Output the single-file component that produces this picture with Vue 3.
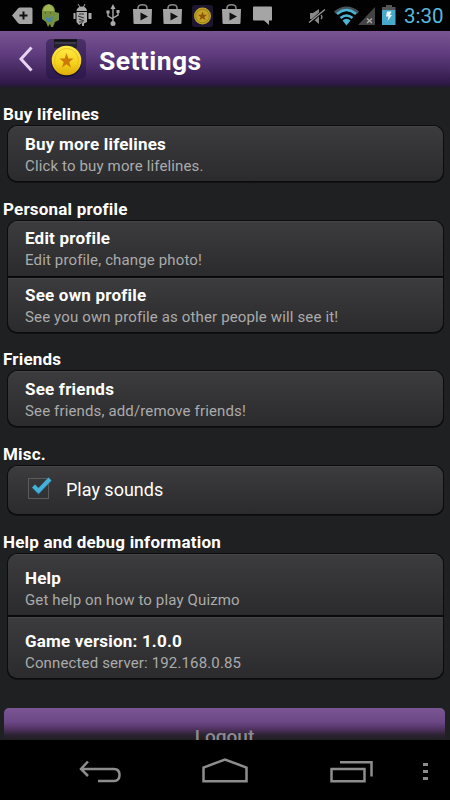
<script setup>
import { ref } from 'vue'

const soundsOn = ref(true)
const sections = [
  { title: 'Buy lifelines', rows: [{ title: 'Buy more lifelines', text: 'Click to buy more lifelines.' }] },
  {
    title: 'Personal profile',
    rows: [
      { title: 'Edit profile', text: 'Edit profile, change photo!' },
      { title: 'See own profile', text: 'See you own profile as other people will see it!' },
    ],
  },
  { title: 'Friends', rows: [{ title: 'See friends', text: 'See friends, add/remove friends!' }] },
  { title: 'Misc.', rows: [{ check: true, title: 'Play sounds' }] },
  {
    title: 'Help and debug information',
    tall: true,
    rows: [
      { title: 'Help', text: 'Get help on how to play Quizmo' },
      { title: 'Game version: 1.0.0', text: 'Connected server: 192.168.0.85' },
    ],
  },
]
</script>

<template>
  <div class="screen">
    <header class="status">
      <svg class="status-icons" width="280" height="31" viewBox="0 0 280 31">
        <path d="M12 15.500 18 8.500Q19 7.500 20 7.500H31Q32.500 7.500 32.500 9V22.500Q32.500 24 31 24H20Q19 24 18 23Z" fill="#a5a5a5" />
        <path d="M23.500 11.500v8M19.500 15.500h8" stroke="#111" stroke-width="2" />
        <path d="M42 14Q41 5 49 4Q55 5 55 12L59 13V20L55 22L53 27H51L50 24L48 27L46 22L42 19Z" fill="#77903c" />
        <path d="M43 11Q44 5 49 4.500Q54 6 54 11Z" fill="#a0b650" />
        <path d="M45 17 49 18 53 16 52 22 47 22Z" fill="#4b86a0" />
        <path d="M45 13h1M50 13h1" stroke="#334016" />
        <path d="M76.500 11Q77 6.500 82 6.500Q86.500 6.500 87 11ZM76.500 12H87V22L84 23.500V26H82V23L79 25L76.500 22ZM73.500 13h2v6h-2zM88.500 13h3v6h-3z" fill="#aaa" />
        <path d="M78 4 80 7M85 4 83.500 7" stroke="#aaa" />
        <path d="M79 14h5M78 16l6 2M79 19l5 2M79 22h4" stroke="#333" stroke-width="1.200" />
        <g fill="none" stroke="#aaa" stroke-width="1.400">
          <path d="M113 8V23M108 12V16L113 19M118 12V15L113 18" />
        </g>
        <path d="M113 4 115.500 9H110.500ZM106.500 10.500h3v3h-3zM116.500 10h3v3h-3z" fill="#aaa" />
        <circle cx="113" cy="23.500" r="2.500" fill="#aaa" />
        <g v-for="x in [133, 163, 222]" :key="x" :transform="`translate(${x} 0)`">
          <path d="M5 10V8Q5 4.800 9.500 4.800Q14 4.800 14 8V10" fill="none" stroke="#888" stroke-width="1.500" />
          <path d="M0 9H19L18.500 23Q18.500 24 17.500 24H1.500Q.5 24 .5 23Z" fill="#a5a5a5" />
          <path d="M7.500 12.500 15 16.500 7.500 20.500Z" fill="#111" />
        </g>
        <rect x="192" y="5" width="21" height="22" rx="3" fill="#1d1632" />
        <circle cx="202.500" cy="16" r="8.500" fill="#c3a323" />
        <circle cx="202.500" cy="16" r="6.800" fill="none" stroke="#8a7119" stroke-width=".7" />
        <path d="M202.500 11.500 203.700 14.700 207 14.800 204.400 17 205.400 20 202.500 18.200 199.600 20 200.600 17 198 14.800 201.300 14.700Z" fill="#8f5310" />
        <path d="M254 6.500H271Q272 6.500 272 7.500V20Q272 20.500 271 20.500H269V25L264 20.500H254Q253 20.500 253 19.500V7.500Q253 6.500 254 6.500Z" fill="#a5a5a5" />
      </svg>
      <svg class="status-icons" width="92" height="31" viewBox="305 0 92 31">
        <path d="M310 13H313L319 9V24L313 19H310Z" fill="#888" />
        <path d="M309 23.500 325 9" stroke="#000" stroke-width="3" />
        <path d="M309 22.500 325 9.500" stroke="#999" stroke-width="1.400" />
        <path d="M321 15q2 2 0 4" fill="none" stroke="#888" stroke-width="1.300" />
        <path d="M334 11.500Q346.500 1.500 359 11.500L357 14Q346.500 5 336 14Z" fill="#45545a" />
        <g fill="none" stroke="#4cb4d5">
          <path d="M337 14Q346.500 6 356 14" stroke-width="2.600" />
          <path d="M340.500 18Q346.500 13 352.500 18" stroke-width="2.600" />
        </g>
        <path d="M342.500 20.500Q346.500 17 350.500 20.500L346.500 25.500Z" fill="#4cb4d5" />
        <path d="M375 7V25H358Z" fill="#434343" />
        <path d="M367 18.500 372 23M372 18.500 367 23" stroke="#aaa" stroke-width="1.400" />
        <path d="M386 5H392V7H395.500V10H382V7H386Z" fill="#555" />
        <path d="M382 10H395.500V25H382Z" fill="#48aacb" />
        <path d="M387 11.500H391.500L390 15H392L387.500 21L388.500 16.500H386Z" fill="#f2f8fa" />
      </svg>
      <span class="clock">3:30</span>
    </header>

    <div class="appbar">
      <svg class="back" width="16" height="28" viewBox="0 0 16 28"><path d="M13.500 2.500 3 14 13.500 25.500" fill="none" stroke="#e6d5f2" stroke-width="3" /></svg>
      <svg class="logo" width="40" height="42" viewBox="0 0 40 42">
        <defs>
          <linearGradient id="gold" x2="0" y2="1"><stop stop-color="#ffed4a" /><stop offset=".6" stop-color="#f5d21c" /><stop offset="1" stop-color="#dca80c" /></linearGradient>
          <linearGradient id="tile" x2="0" y2="1"><stop stop-color="#4a3069" /><stop offset="1" stop-color="#2c184c" /></linearGradient>
        </defs>
        <rect width="40" height="40" rx="5" fill="url(#tile)" />
        <path d="M8 0H31V9H8Z" fill="#242130" />
        <path d="M8 1.500H31" stroke="#111016" stroke-width="1.800" />
        <path d="M9 4H30" stroke="#55505f" />
        <circle cx="20.500" cy="23" r="15" fill="#160e25" />
        <circle cx="20.500" cy="21.500" r="14.800" fill="url(#gold)" />
        <circle cx="20.500" cy="21.500" r="12" fill="none" stroke="#e6b91b" stroke-width=".8" />
        <path d="M20.500 14 22.300 19.500 27.500 19.600 23.300 22.900 24.900 28.500 20.500 25.200 16.100 28.500 17.700 22.900 13.500 19.600 18.700 19.500Z" fill="#ce780b" />
      </svg>
      <h1>Settings</h1>
    </div>

    <main>
      <section v-for="s in sections" :key="s.title">
        <h2>{{ s.title }}</h2>
        <div class="card" :class="{ tall: s.tall }">
          <div v-for="r in s.rows" :key="r.title" class="row" :class="{ check: r.check }">
            <template v-if="r.check">
              <svg width="28" height="26" viewBox="0 0 28 26" @click="soundsOn = !soundsOn">
                <rect x="3.500" y="4.500" width="20" height="20" fill="none" stroke="#5b5b5d" />
                <path v-if="soundsOn" d="M8.500 12 13.500 17.500 25 5" fill="none" stroke="#266078" stroke-width="5.500" opacity=".5" />
                <path v-if="soundsOn" d="M8.500 12 13.500 17 25 5" fill="none" stroke="#43b1d8" stroke-width="4" />
              </svg>
              <span>{{ r.title }}</span>
            </template>
            <template v-else>
              <h3>{{ r.title }}</h3>
              <p>{{ r.text }}</p>
            </template>
          </div>
        </div>
      </section>
      <button class="logout">Logout</button>
    </main>

    <nav>
      <svg width="450" height="60" viewBox="0 740 450 60">
        <g fill="none" stroke="#8d8d8d" stroke-width="2.500">
          <path d="M88 761.500 81 769 88 776M81 769H114Q119.500 769 119.500 775Q119.500 781 114 781H98" />
          <path d="M203.500 781.300V767.500L225 759.500 246.500 767.500V781.300Z" />
          <path d="M331.500 769H364.500V781.300H331.500ZM340 762.300H371.500V776.500" />
        </g>
        <path d="M423 763h5v3h-5zM423 770h5v3h-5zM423 777h5v3h-5z" fill="#8d8d8d" />
      </svg>
    </nav>
  </div>
</template>

<style>
body {
  margin: 0;
  background: #000;
}
</style>

<style scoped>
.screen {
  width: 450px;
  height: 800px;
  display: flex;
  flex-direction: column;
  overflow: hidden;
  background: #000;
  color: #fff;
  font-family: Roboto, sans-serif;
}
.status {
  height: 31px;
  flex: none;
  display: flex;
  justify-content: space-between;
  background: #020202;
}
.status-icons:first-child {
  margin-right: 25px;
}
.clock {
  flex: 1;
  padding-left: 7px;
  font-size: 20.500px;
  line-height: 32px;
  color: #5bb9dc;
}
.appbar {
  height: 57px;
  flex: none;
  display: flex;
  align-items: flex-start;
  background: linear-gradient(#7a5592, #5e3b7d 42%, #321a4b 90%, #27193a 96%, #1e1f21);
}
.back {
  margin: 14px 0 0 18px;
}
.logo {
  margin: 8px 0 0 12px;
}
h1 {
  margin: 0 0 0 13px;
  font-size: 26.500px;
  line-height: 59px;
  font-weight: 700;
  letter-spacing: 0.42px;
}
main {
  flex: 1;
  min-height: 0;
  padding: 17px 0 0;
  overflow: hidden;
  background: #1f2021;
}
section {
  margin-bottom: 18.500px;
}
h2 {
  margin: 0;
  padding: 0 0 0 3px;
  height: 21px;
  font-size: 17px;
  line-height: 18px;
  font-weight: 700;
  letter-spacing: 0.2px;
  white-space: nowrap;
}
.card {
  margin: 0 7px 0 8px;
  border-radius: 9px;
  box-shadow: 0 0 0 1px #0c0c0d, 0 1px 0 1px #101112;
  overflow: hidden;
  background: #0a0a0b;
}
.row {
  box-sizing: border-box;
  height: 55px;
  padding: 7.600px 0 0 17px;
  background: linear-gradient(#3c3c3e, #2b2b2d);
  box-shadow: inset 0 1px #454547;
}
.row + .row {
  margin-top: 2px;
  height: 54px;
}
.tall .row {
  height: 61px;
  padding-top: 14px;
}
.row.check {
  height: 48.500px;
  padding: 0 0 1px 17px;
  display: flex;
  align-items: center;
  gap: 13px;
  font-size: 18px;
}
.row.check svg {
  margin-bottom: 5px;
}
h3 {
  margin: 0;
  font-size: 17px;
  line-height: 21px;
  font-weight: 700;
  letter-spacing: 0.2px;
}
p {
  margin: 0;
  font-size: 15px;
  line-height: 23px;
  letter-spacing: 0.14px;
  color: #ababab;
}
.logout {
  display: block;
  box-sizing: border-box;
  width: 441px;
  height: 60px;
  margin: 30.500px 0 0 4px;
  border: 0;
  border-radius: 5px;
  background: linear-gradient(#7c5694, #6b4786 14px, #553568 20px, #2c2233 27px, #1f2021 32px);
  color: #8c8a90;
  font: 500 19px/56px Roboto, sans-serif;
  padding: 0 0 2px;
}
nav {
  height: 60px;
  flex: none;
}
</style>
